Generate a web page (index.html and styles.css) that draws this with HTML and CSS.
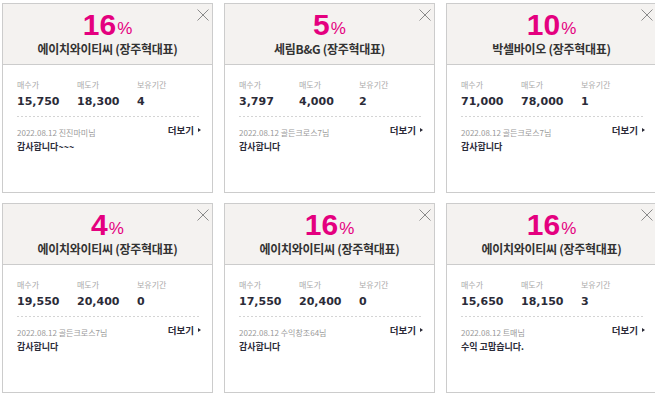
FILE: index.html
```html
<!DOCTYPE html>
<html>
	<head>
		<meta charset="UTF-8">
		<title>수익 인증</title>
		<link rel="stylesheet" href="styles.css">
	</head>
	<body>
		<div id="wrap">
			<ul class="list">
				<li class="card">
					<div class="head">
						<p class="rate"><b>16</b><span>%</span></p>
						<p class="name">에이치와이티씨 (장주혁대표)</p>
						<button class="close"><svg width="12" height="12" viewBox="0 0 12 12"><path d="M0.5 0.5L11.5 11.5M11.5 0.5L0.5 11.5"/></svg></button>
					</div>
					<div class="body">
						<ul class="prices">
							<li><span>매수가</span><em>15,750</em></li>
							<li><span>매도가</span><em>18,300</em></li>
							<li><span>보유기간</span><em>4</em></li>
						</ul>
						<div class="review">
							<div class="top">
								<p class="meta">2022.08.12 진진마미님</p>
								<a class="more">더보기</a>
							</div>
							<p class="msg">감사합니다~~~</p>
						</div>
					</div>
				</li>
				<li class="card">
					<div class="head">
						<p class="rate"><b>5</b><span>%</span></p>
						<p class="name">세림B&amp;G (장주혁대표)</p>
						<button class="close"><svg width="12" height="12" viewBox="0 0 12 12"><path d="M0.5 0.5L11.5 11.5M11.5 0.5L0.5 11.5"/></svg></button>
					</div>
					<div class="body">
						<ul class="prices">
							<li><span>매수가</span><em>3,797</em></li>
							<li><span>매도가</span><em>4,000</em></li>
							<li><span>보유기간</span><em>2</em></li>
						</ul>
						<div class="review">
							<div class="top">
								<p class="meta">2022.08.12 골든크로스7님</p>
								<a class="more">더보기</a>
							</div>
							<p class="msg">감사합니다</p>
						</div>
					</div>
				</li>
				<li class="card">
					<div class="head">
						<p class="rate"><b>10</b><span>%</span></p>
						<p class="name">박셀바이오 (장주혁대표)</p>
						<button class="close"><svg width="12" height="12" viewBox="0 0 12 12"><path d="M0.5 0.5L11.5 11.5M11.5 0.5L0.5 11.5"/></svg></button>
					</div>
					<div class="body">
						<ul class="prices">
							<li><span>매수가</span><em>71,000</em></li>
							<li><span>매도가</span><em>78,000</em></li>
							<li><span>보유기간</span><em>1</em></li>
						</ul>
						<div class="review">
							<div class="top">
								<p class="meta">2022.08.12 골든크로스7님</p>
								<a class="more">더보기</a>
							</div>
							<p class="msg">감사합니다</p>
						</div>
					</div>
				</li>
				<li class="card">
					<div class="head">
						<p class="rate"><b>4</b><span>%</span></p>
						<p class="name">에이치와이티씨 (장주혁대표)</p>
						<button class="close"><svg width="12" height="12" viewBox="0 0 12 12"><path d="M0.5 0.5L11.5 11.5M11.5 0.5L0.5 11.5"/></svg></button>
					</div>
					<div class="body">
						<ul class="prices">
							<li><span>매수가</span><em>19,550</em></li>
							<li><span>매도가</span><em>20,400</em></li>
							<li><span>보유기간</span><em>0</em></li>
						</ul>
						<div class="review">
							<div class="top">
								<p class="meta">2022.08.12 골든크로스7님</p>
								<a class="more">더보기</a>
							</div>
							<p class="msg">감사합니다</p>
						</div>
					</div>
				</li>
				<li class="card">
					<div class="head">
						<p class="rate"><b>16</b><span>%</span></p>
						<p class="name">에이치와이티씨 (장주혁대표)</p>
						<button class="close"><svg width="12" height="12" viewBox="0 0 12 12"><path d="M0.5 0.5L11.5 11.5M11.5 0.5L0.5 11.5"/></svg></button>
					</div>
					<div class="body">
						<ul class="prices">
							<li><span>매수가</span><em>17,550</em></li>
							<li><span>매도가</span><em>20,400</em></li>
							<li><span>보유기간</span><em>0</em></li>
						</ul>
						<div class="review">
							<div class="top">
								<p class="meta">2022.08.12 수익창조64님</p>
								<a class="more">더보기</a>
							</div>
							<p class="msg">감사합니다</p>
						</div>
					</div>
				</li>
				<li class="card">
					<div class="head">
						<p class="rate"><b>16</b><span>%</span></p>
						<p class="name">에이치와이티씨 (장주혁대표)</p>
						<button class="close"><svg width="12" height="12" viewBox="0 0 12 12"><path d="M0.5 0.5L11.5 11.5M11.5 0.5L0.5 11.5"/></svg></button>
					</div>
					<div class="body">
						<ul class="prices">
							<li><span>매수가</span><em>15,650</em></li>
							<li><span>매도가</span><em>18,150</em></li>
							<li><span>보유기간</span><em>3</em></li>
						</ul>
						<div class="review">
							<div class="top">
								<p class="meta">2022.08.12 트매님</p>
								<a class="more">더보기</a>
							</div>
							<p class="msg">수익 고맙습니다.</p>
						</div>
					</div>
				</li>
			</ul>
		</div>
	</body>
</html>
```

FILE: styles.css
```css
body{
	margin: 0;
	background: #fff;
	font-family: "Noto Sans CJK KR", sans-serif;
	color: #333;
}
ul,li{
	padding: 0;
	margin: 0;
	list-style: none;
}
p{
	margin: 0;
}
em{
	font-style: normal;
}
#wrap{
	padding: 3px 0 0 2px;
}
.list{
	width: 653px;
	overflow: hidden;
	display: grid;
	grid-template-columns: repeat(3, 211px);
	column-gap: 11px;
	row-gap: 10px;
}
.card{
	position: relative;
	box-sizing: border-box;
	height: 190px;
	border: 1px solid #ccc;
	background: #fff;
}
.head{
	box-sizing: border-box;
	height: 61px;
	padding-top: 6px;
	background: #f4f2f0;
	border-bottom: 1px solid #ccc;
	text-align: center;
}
.rate{
	height: 30px;
	line-height: 30px;
	color: #e4007f;
	font-family: "Liberation Sans", sans-serif;
}
.rate b{
	font-size: 30px;
	font-weight: bold;
}
.rate span{
	font-size: 17px;
	vertical-align: 1px;
	margin-left: 1px;
}
.name{
	margin-top: 1px;
	font-size: 12px;
	line-height: 16px;
	font-weight: bold;
	letter-spacing: -0.3px;
	color: #333;
}
.close{
	position: absolute;
	top: 5px;
	right: 3px;
	width: 12px;
	height: 12px;
	padding: 0;
	border: 0;
	background: none;
}
.close svg{
	display: block;
	fill: none;
	stroke: #8a8a8a;
	stroke-width: 1;
}
.body{
	padding: 14px 11px 0 14px;
}
.prices{
	display: grid;
	grid-template-columns: 60px 60px auto;
	padding-bottom: 7px;
}
.prices span{
	display: block;
	font-size: 8px;
	line-height: 12px;
	color: #aaa;
}
.prices em{
	display: block;
	margin-top: 4px;
	font-family: "DejaVu Sans", sans-serif;
	font-size: 11px;
	line-height: 14px;
	font-weight: bold;
	color: #2b2b38;
}
.review{
	padding-top: 11px;
	background: linear-gradient(to right, #d4d4d4 50%, transparent 50%) repeat-x 0 0 / 4px 1px;
}
.top{
	display: flex;
	justify-content: space-between;
	align-items: flex-start;
}
.meta{
	font-size: 8px;
	line-height: 12px;
	color: #999;
}
.more{
	display: flex;
	align-items: center;
	gap: 4px;
	margin-top: -3px;
	font-size: 9.5px;
	line-height: 12px;
	font-weight: bold;
	color: #2b2b38;
}
.more:after{
	content: "";
	border-left: 3px solid #2b2b38;
	border-top: 2.5px solid transparent;
	border-bottom: 2.5px solid transparent;
}
.msg{
	margin-top: 2px;
	font-size: 9px;
	line-height: 12px;
	font-weight: bold;
	color: #2b2b38;
}
```
